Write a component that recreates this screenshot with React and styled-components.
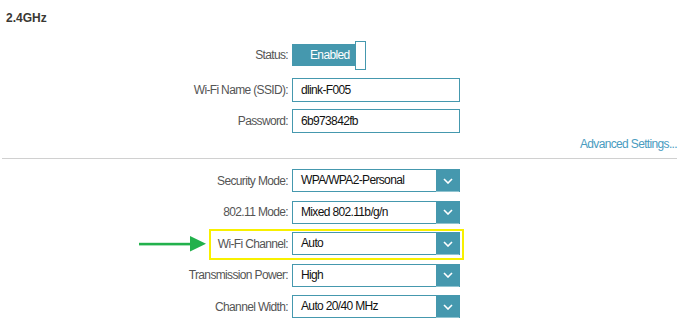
import React from "react";
import styled, { createGlobalStyle } from "styled-components";

const TEAL = "#4598ae";

const GlobalStyle = createGlobalStyle`
  body {
    margin: 0;
    background: #fff;
    font-family: "Liberation Sans", Arial, sans-serif;
  }
`;

const basicRows = [
  { label: "Wi-Fi Name (SSID):", value: "dlink-F005", top: 11 },
  { label: "Password:", value: "6b973842fb", top: 7 },
];

const selectRows = [
  { label: "Security Mode:", value: "WPA/WPA2-Personal" },
  { label: "802.11 Mode:", value: "Mixed 802.11b/g/n" },
  { label: "Wi-Fi Channel:", value: "Auto", marked: true },
  { label: "Transmission Power:", value: "High" },
  { label: "Channel Width:", value: "Auto 20/40 MHz" },
];

const App = () => {
  return (
    <>
      <GlobalStyle />
      <Page>
        <Title>2.4GHz</Title>
        <Row $top={17}>
          <Label>Status:</Label>
          <Toggle>
            <ToggleFace>Enabled</ToggleFace>
            <Knob />
          </Toggle>
        </Row>
        {basicRows.map((row) => (
          <Row key={row.label} $top={row.top}>
            <Label>{row.label}</Label>
            <TextBox>{row.value}</TextBox>
          </Row>
        ))}
        <LinkRow>
          <AdvancedLink>Advanced Settings...</AdvancedLink>
        </LinkRow>
        <Divider />
        <SelectList>
          {selectRows.map((row) => (
            <SelectRow key={row.label} $marked={row.marked}>
              {row.marked && (
                <Pointer width="68" height="16" viewBox="0 0 68 16">
                  <rect x="0" y="6.8" width="53" height="2.6" fill="#22b14c" />
                  <polygon points="51,0 67,7.8 51,15.5" fill="#22b14c" />
                </Pointer>
              )}
              <Label>{row.label}</Label>
              <Select>
                <SelectValue>{row.value}</SelectValue>
                <Caret>
                  <svg width="10" height="6" viewBox="0 0 10 6">
                    <path d="M1 1l4 4 4-4" fill="none" stroke="#fff" strokeWidth="1.6" />
                  </svg>
                </Caret>
              </Select>
            </SelectRow>
          ))}
        </SelectList>
      </Page>
    </>
  );
};

export default App;

const Page = styled.div`
  width: 680px;
  height: 321px;
  box-sizing: border-box;
  padding-top: 10px;
  overflow: hidden;
  font-size: 12px;
  letter-spacing: -0.65px;
`;

const Title = styled.div`
  padding-left: 6px;
  height: 16px;
  line-height: 16px;
  font-size: 12px;
  letter-spacing: 0;
  font-weight: bold;
  color: #3a3833;
`;

const Row = styled.div`
  display: grid;
  grid-template-columns: 288px 168px;
  column-gap: 4px;
  align-items: center;
  height: 24px;
  margin-top: ${(p) => p.$top}px;
`;

const Label = styled.div`
  text-align: right;
  color: #555;
  white-space: nowrap;
`;

const Toggle = styled.div`
  display: flex;
  align-items: center;
  height: 24px;
`;

const ToggleFace = styled.div`
  width: 64px;
  height: 22px;
  background: ${TEAL};
  color: #fff;
  line-height: 22px;
  padding-left: 18px;
  box-sizing: border-box;
`;

const Knob = styled.div`
  width: 11px;
  height: 29px;
  box-sizing: border-box;
  border: 1px solid ${TEAL};
  background: #fff;
  margin-left: -1px;
`;

const TextBox = styled.div`
  height: 24px;
  box-sizing: border-box;
  border: 1px solid ${TEAL};
  padding-left: 8px;
  line-height: 22px;
  color: #111;
`;

const LinkRow = styled.div`
  display: flex;
  justify-content: flex-end;
  padding-right: 3px;
  margin-top: 4px;
  height: 14px;
  line-height: 14px;
`;

const AdvancedLink = styled.span`
  color: #4a9cbf;
`;

const Divider = styled.div`
  margin: 7px 3px 0 2px;
  height: 1px;
  background: #d0d0d0;
`;

const SelectList = styled.div`
  display: flex;
  flex-direction: column;
  gap: 8.5px;
  margin-top: 10px;
`;

const SelectRow = styled.div`
  position: relative;
  display: grid;
  grid-template-columns: 288px 168px;
  column-gap: 4px;
  align-items: center;
  height: 23px;

  ${(p) =>
    p.$marked &&
    `
    &::after {
      content: "";
      position: absolute;
      left: 209px;
      top: -3.5px;
      width: 255px;
      height: 31px;
      box-sizing: border-box;
      border: 2px solid #f8f000;
      pointer-events: none;
    }
  `}
`;

const Pointer = styled.svg`
  position: absolute;
  left: 139px;
  top: 4px;
`;

const Select = styled.div`
  display: flex;
  height: 23px;
  box-sizing: border-box;
  border: 1px solid ${TEAL};
`;

const SelectValue = styled.div`
  flex: 1;
  padding-left: 8px;
  line-height: 21px;
  color: #111;
`;

const Caret = styled.div`
  width: 23px;
  display: flex;
  align-items: center;
  justify-content: center;
  background: ${TEAL};
  border-bottom: 1px solid #8fc3d0;
  margin-bottom: -1px;
`;
